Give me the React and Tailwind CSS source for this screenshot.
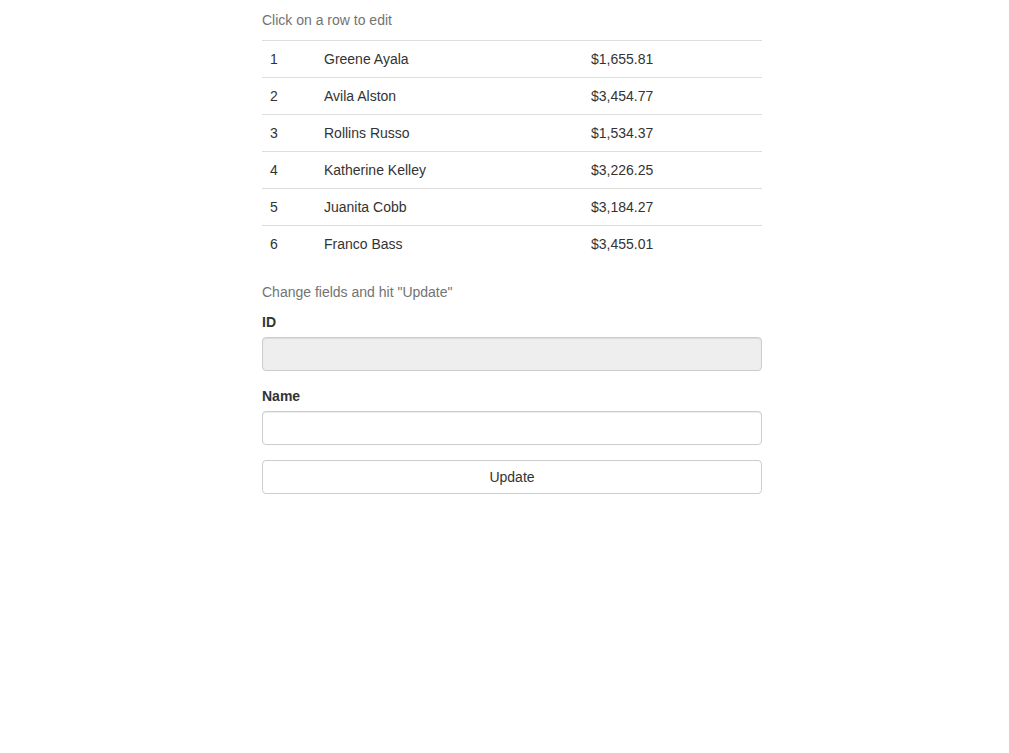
import React, { useState } from 'react';

const ROWS = [
    { id: 1, name: 'Greene Ayala', amount: '$1,655.81' },
    { id: 2, name: 'Avila Alston', amount: '$3,454.77' },
    { id: 3, name: 'Rollins Russo', amount: '$1,534.37' },
    { id: 4, name: 'Katherine Kelley', amount: '$3,226.25' },
    { id: 5, name: 'Juanita Cobb', amount: '$3,184.27' },
    { id: 6, name: 'Franco Bass', amount: '$3,455.01' },
];

const App = () => {
    const [selected, setSelected] = useState({ id: '', name: '' });

    return (
        <div className="min-h-[753px] bg-white text-[14px] leading-[20px] text-[#333] font-['Liberation_Sans',Arial,sans-serif]">
            <div className="w-[500px] ml-[262px] pt-[10px]">
                <p className="text-[#737373] mb-[10px]">Click on a row to edit</p>

                <table className="w-full border-collapse mb-[20px]">
                    <tbody>
                        {ROWS.map((row) => (
                            <tr
                                key={row.id}
                                onClick={() => setSelected({ id: row.id, name: row.name })}
                                className="cursor-pointer"
                            >
                                <td className="w-[54px] px-[8px] py-[8px] border-t border-[#ddd]">{row.id}</td>
                                <td className="w-[267px] px-[8px] py-[8px] border-t border-[#ddd]">{row.name}</td>
                                <td className="px-[8px] py-[8px] border-t border-[#ddd]">{row.amount}</td>
                            </tr>
                        ))}
                    </tbody>
                </table>

                <p className="text-[#737373] mb-[10px]">Change fields and hit "Update"</p>

                <form onSubmit={(e) => e.preventDefault()}>
                    <div className="mb-[15px]">
                        <label className="block font-bold mb-[5px]">ID</label>
                        <input
                            type="text"
                            disabled
                            value={selected.id}
                            readOnly
                            className="block w-full h-[34px] px-[12px] py-[6px] bg-[#eee] border border-[#ccc] rounded-[4px] shadow-[inset_0_1px_1px_rgba(0,0,0,0.075)] outline-none"
                        />
                    </div>
                    <div className="mb-[15px]">
                        <label className="block font-bold mb-[5px]">Name</label>
                        <input
                            type="text"
                            value={selected.name}
                            onChange={(e) => setSelected({ ...selected, name: e.target.value })}
                            className="block w-full h-[34px] px-[12px] py-[6px] bg-white border border-[#ccc] rounded-[4px] shadow-[inset_0_1px_1px_rgba(0,0,0,0.075)] outline-none"
                        />
                    </div>
                    <button
                        type="submit"
                        className="block w-full h-[34px] bg-white border border-[#ccc] rounded-[4px] text-[#333] hover:bg-[#e6e6e6]"
                    >
                        Update
                    </button>
                </form>
            </div>
        </div>
    );
};

export default App;
